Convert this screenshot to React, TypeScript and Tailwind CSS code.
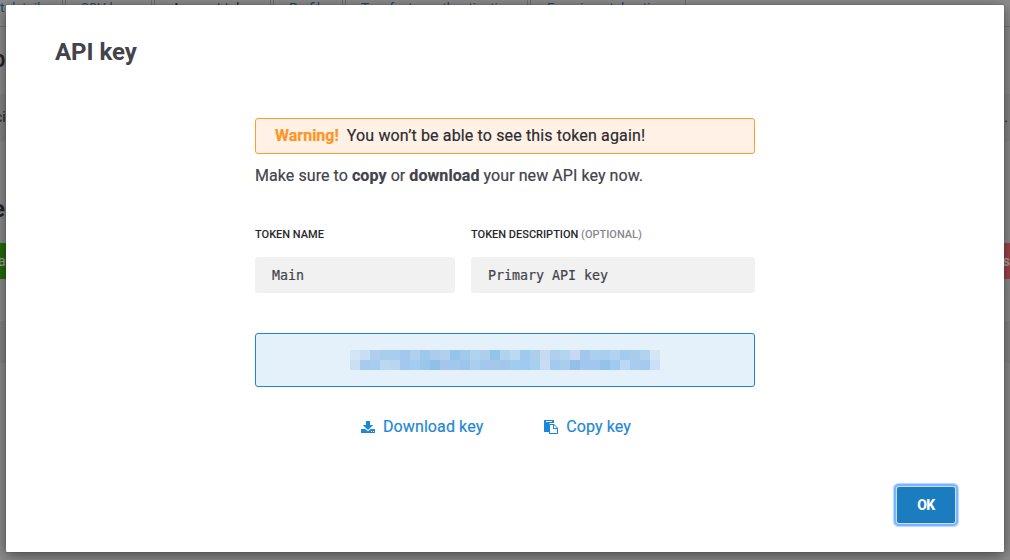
const topCells =
  'd4e5f5 c8def4 b0ceed a9cdef a8cdef a4c8ed aed1f0 9cc8eb acccec b1d0f0 95c5ea 9fcaee b0d3f0 aeceed 92c3e9 b0d2ee b9daf0 9dcaed abcfed c5daf1 aecff0 b3d5f0 c5daf1 a2c6ec accef0 a9cff0 b2d2ef a3cbef a9ccec b0d3f0 d2e6f6';
const bottomCells =
  'c9dff3 a8caed a6cef0 bad9f1 b8d5f1 a1c9ef a3cdf0 9bc6ea 92bfe8 a4c6eb 9fc8ec 9dc5eb aaceee a3c8ed a5c7e9 a4c6eb 9fcdf0 a1cbee a7cff0 c8dcf2 a2c9f0 a9ceec 93c0e8 a1c7ee a1c7ee 95c2e9 9fcaf1 bbd8f3 a8ccf0 a4caee cbe0f5';
const cells = `${topCells} ${bottomCells}`.split(' ');

function Tab({ label, className }: { label: string; className: string }) {
  return (
    <div className={`h-7 shrink-0 border-r border-[#6f6f6f] text-[13.3px] leading-5 whitespace-nowrap ${className}`}>
      <span className="relative -top-[2px]">{label}</span>
    </div>
  );
}

function Backdrop() {
  return (
    <div className="flex h-full flex-col bg-[#8c8c8c] text-[#25252b]">
      <div className="flex h-[27px] shrink-0 gap-[2px] overflow-hidden border-b border-[#757575] text-[#174b73]">
        <Tab label="t details" className="w-[63px]" />
        <Tab label="SSH keys" className="w-[87px] border-l pl-[15px]" />
        <Tab label="Account tokens" className="w-[117px] border-l pl-[17px] text-[#25252b]" />
        <Tab label="Profile" className="w-[70px] border-l pl-[15px]" />
        <Tab label="Two factor authentication" className="w-[183px] border-l pl-[15px]" />
        <Tab label="Experimental options" className="w-[156px] border-l pl-[16px]" />
      </div>
      <div className="flex h-[67px] shrink-0 items-center">
        <span className="-ml-[8px] -mt-[4px] text-[24px] font-medium">p</span>
      </div>
      <div className="flex h-[47px] shrink-0 items-center justify-between bg-[#858585] text-[14px]">
        <span className="-ml-[5px]">ci</span>
        <span className="pr-[2px]">.</span>
      </div>
      <div className="flex h-[102px] shrink-0 items-center">
        <span className="-ml-[8px] pt-[34px] text-[24px] font-bold">e</span>
      </div>
      <div className="flex h-9 shrink-0 items-center justify-between text-[14px] text-[#a5a5a5]">
        <span className="flex h-full w-12 items-center bg-[#246c0b]"><span className="-ml-[2px]">a</span></span>
        <span className="flex h-full w-12 items-center justify-end bg-[#a04449] font-bold">s</span>
      </div>
      <div className="h-[42px] shrink-0" />
      <div className="h-[42px] shrink-0 bg-[#858585]" />
    </div>
  );
}

function DownloadIcon() {
  return (
    <svg className="h-[13px] w-[14px]" viewBox="0 0 14 13" fill="#1b87d5">
      <path d="M5 0h4v4h3.2L7 9 1.8 4H5z" />
      <path d="M.5 8h3.7L7 10.3 9.8 8h3.7q.5 0 .5.5v3q0 .5-.5.5H.5q-.5 0-.5-.5v-3Q0 8 .5 8zM10 10v1h1v-1zm2 0v1h1v-1z" fillRule="evenodd" />
    </svg>
  );
}

function PasteIcon() {
  return (
    <svg className="h-[14px] w-[14px]" viewBox="0 0 14 14" fill="#1b87d5">
      <path d="M.5 0h9q.5 0 .5.5V3H6.5Q5 3 5 4.5V12H.5Q0 12 0 11.5V.5Q0 0 .5 0zM2 1v1h6V1z" fillRule="evenodd" />
      <path d="M5.5 4H10l4 4v5.5q0 .5-.5.5h-8q-.5 0-.5-.5v-9Q5 4 5.5 4zM6 5v8h7V9H9V5zm4 0v3h3z" fillRule="evenodd" />
    </svg>
  );
}

function Field({ label, hint, value, width }: { label: string; hint?: string; value: string; width: string }) {
  return (
    <div className={width}>
      <div className="text-[11px] leading-4 font-medium whitespace-nowrap text-[#27272d]">
        {label}{hint && <span className="text-[#88898d]"> {hint}</span>}
      </div>
      <div className="mt-[14px] flex h-9 items-center rounded-[3px] bg-[#f1f1f1] pt-px pl-[17px] font-['DejaVu_Sans_Mono',monospace] text-[13.3px] whitespace-pre text-[#43434c] [-webkit-text-stroke:0.2px]">
        {value}
      </div>
    </div>
  );
}

export default function App() {
  return (
    <div className="relative h-[560px] w-[1010px] overflow-hidden font-['Roboto',sans-serif]">
      <Backdrop />
      <div className="absolute top-[5px] left-[6px] flex h-[547px] w-[998px] flex-col rounded-[1px] bg-white text-[#43434c] shadow-[0_0_1px_#333,0_3px_14px_rgba(0,0,0,0.5)]">
        <h1 className="pt-[32px] pl-[49px] text-[24px] leading-[30px] font-bold tracking-[-0.05px]">API key</h1>
        <div className="ml-[249px] flex w-[500px] flex-col pt-[51px]">
          <div className="flex h-9 items-center gap-[8px] rounded-[3px] border border-[#fba02c] bg-[#fff1e5] pl-[19px] text-[16px] text-[#2c2c32]">
            <strong className="text-[#ff9427] [-webkit-text-stroke:0.2px]">Warning!</strong>
            <span className="tracking-[0.14px] [-webkit-text-stroke:0.2px]">You won’t be able to see this token again!</span>
          </div>
          <p className="mt-[10px] text-[16px] leading-6 tracking-[0.07px] [-webkit-text-stroke:0.2px]">
            Make sure to <strong>copy</strong> or <strong>download</strong> your new API key now.
          </p>
          <div className="mt-[39px] flex gap-4">
            <Field label="TOKEN NAME" value="Main" width="w-[200px]" />
            <Field label="TOKEN DESCRIPTION" hint="(OPTIONAL)" value="Primary API key" width="w-[284px]" />
          </div>
          <div className="mt-10 flex h-[54px] items-center justify-center rounded-[3px] border border-[#1b87d5] bg-[#e4f1fb]">
            <div className="grid grid-cols-[repeat(31,10px)]">
              {cells.map((color, i) => (
                <div key={i} className="h-[10px]" style={{ backgroundColor: `#${color}` }} />
              ))}
            </div>
          </div>
          <div className="mt-[28px] flex gap-[61px] pl-[106px] text-[16px] leading-6 tracking-[0.1px] text-[#2487d6] [-webkit-text-stroke:0.2px]">
            <span className="flex items-center gap-2"><DownloadIcon />Download key</span>
            <span className="flex items-center gap-2"><PasteIcon />Copy key</span>
          </div>
        </div>
        <div className="mt-auto flex justify-end pr-[49px] pb-[29px]">
          <button className="h-9 w-[58px] rounded-[2px] bg-[#1c7cc0] text-[14px] font-extrabold tracking-[-0.5px] text-white shadow-[0_0_0_1px_#c3dffc,0_0_0_3px_#7db5fb,0_0_1px_4px_#b5d5fd]">OK</button>
        </div>
      </div>
    </div>
  );
}
